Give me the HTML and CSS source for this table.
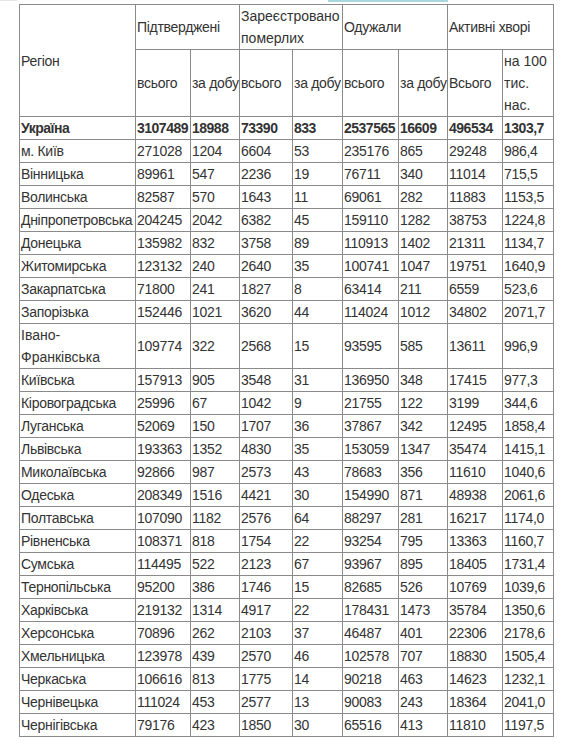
FILE: index.html
```html
<!DOCTYPE html>
<html lang="uk">
<head>
<meta charset="utf-8">
<title>Регіони</title>
<link rel="stylesheet" href="styles.css">
</head>
<body>
<div class="topbar"><span class="topbar-line"></span><span class="topbar-accent"></span></div>
<table class="stats">
<colgroup>
<col class="c-region"><col class="c1"><col class="c2"><col class="c3"><col class="c4"><col class="c5"><col class="c6"><col class="c7"><col class="c8">
</colgroup>
<thead>
<tr><td rowspan="2">Регіон</td><td colspan="2">Підтверджені</td><td colspan="2" class="wrap">Зареєстровано померлих</td><td colspan="2">Одужали</td><td colspan="2">Активні хворі</td></tr>
<tr><td>всього</td><td>за добу</td><td>всього</td><td>за добу</td><td>всього</td><td>за добу</td><td>Всього</td><td class="wrap">на 100 тис. нас.</td></tr>
</thead>
<tbody>
<tr class="total"><td>Україна</td><td>3107489</td><td>18988</td><td>73390</td><td>833</td><td>2537565</td><td>16609</td><td>496534</td><td>1303,7</td></tr>
<tr><td>м. Київ</td><td>271028</td><td>1204</td><td>6604</td><td>53</td><td>235176</td><td>865</td><td>29248</td><td>986,4</td></tr>
<tr><td>Вінницька</td><td>89961</td><td>547</td><td>2236</td><td>19</td><td>76711</td><td>340</td><td>11014</td><td>715,5</td></tr>
<tr><td>Волинська</td><td>82587</td><td>570</td><td>1643</td><td>11</td><td>69061</td><td>282</td><td>11883</td><td>1153,5</td></tr>
<tr><td>Дніпропетровська</td><td>204245</td><td>2042</td><td>6382</td><td>45</td><td>159110</td><td>1282</td><td>38753</td><td>1224,8</td></tr>
<tr><td>Донецька</td><td>135982</td><td>832</td><td>3758</td><td>89</td><td>110913</td><td>1402</td><td>21311</td><td>1134,7</td></tr>
<tr><td>Житомирська</td><td>123132</td><td>240</td><td>2640</td><td>35</td><td>100741</td><td>1047</td><td>19751</td><td>1640,9</td></tr>
<tr><td>Закарпатська</td><td>71800</td><td>241</td><td>1827</td><td>8</td><td>63414</td><td>211</td><td>6559</td><td>523,6</td></tr>
<tr><td>Запорізька</td><td>152446</td><td>1021</td><td>3620</td><td>44</td><td>114024</td><td>1012</td><td>34802</td><td>2071,7</td></tr>
<tr><td class="wrap">Івано-Франківська</td><td>109774</td><td>322</td><td>2568</td><td>15</td><td>93595</td><td>585</td><td>13611</td><td>996,9</td></tr>
<tr><td>Київська</td><td>157913</td><td>905</td><td>3548</td><td>31</td><td>136950</td><td>348</td><td>17415</td><td>977,3</td></tr>
<tr><td>Кіровоградська</td><td>25996</td><td>67</td><td>1042</td><td>9</td><td>21755</td><td>122</td><td>3199</td><td>344,6</td></tr>
<tr><td>Луганська</td><td>52069</td><td>150</td><td>1707</td><td>36</td><td>37867</td><td>342</td><td>12495</td><td>1858,4</td></tr>
<tr><td>Львівська</td><td>193363</td><td>1352</td><td>4830</td><td>35</td><td>153059</td><td>1347</td><td>35474</td><td>1415,1</td></tr>
<tr><td>Миколаївська</td><td>92866</td><td>987</td><td>2573</td><td>43</td><td>78683</td><td>356</td><td>11610</td><td>1040,6</td></tr>
<tr><td>Одеська</td><td>208349</td><td>1516</td><td>4421</td><td>30</td><td>154990</td><td>871</td><td>48938</td><td>2061,6</td></tr>
<tr><td>Полтавська</td><td>107090</td><td>1182</td><td>2576</td><td>64</td><td>88297</td><td>281</td><td>16217</td><td>1174,0</td></tr>
<tr><td>Рівненська</td><td>108371</td><td>818</td><td>1754</td><td>22</td><td>93254</td><td>795</td><td>13363</td><td>1160,7</td></tr>
<tr><td>Сумська</td><td>114495</td><td>522</td><td>2123</td><td>67</td><td>93967</td><td>895</td><td>18405</td><td>1731,4</td></tr>
<tr><td>Тернопільська</td><td>95200</td><td>386</td><td>1746</td><td>15</td><td>82685</td><td>526</td><td>10769</td><td>1039,6</td></tr>
<tr><td>Харківська</td><td>219132</td><td>1314</td><td>4917</td><td>22</td><td>178431</td><td>1473</td><td>35784</td><td>1350,6</td></tr>
<tr><td>Херсонська</td><td>70896</td><td>262</td><td>2103</td><td>37</td><td>46487</td><td>401</td><td>22306</td><td>2178,6</td></tr>
<tr><td>Хмельницька</td><td>123978</td><td>439</td><td>2570</td><td>46</td><td>102578</td><td>707</td><td>18830</td><td>1505,4</td></tr>
<tr><td>Черкаська</td><td>106616</td><td>813</td><td>1775</td><td>14</td><td>90218</td><td>463</td><td>14623</td><td>1232,1</td></tr>
<tr><td>Чернівецька</td><td>111024</td><td>453</td><td>2577</td><td>13</td><td>90083</td><td>243</td><td>18364</td><td>2041,0</td></tr>
<tr><td>Чернігівська</td><td>79176</td><td>423</td><td>1850</td><td>30</td><td>65516</td><td>413</td><td>11810</td><td>1197,5</td></tr>
</tbody>
</table>
</body>
</html>
```

FILE: styles.css
```css
html, body {
  margin: 0;
  padding: 0;
  background: #ffffff;
}

body {
  font-family: "Liberation Sans", Arial, sans-serif;
  font-size: 14px;
  color: #333333;
}

.topbar {
  display: flex;
  height: 2px;
  margin-bottom: 2px;
}

.topbar-line {
  width: 17px;
  height: 1px;
  background: #e6e6e6;
}

.topbar-accent {
  margin-left: 311px;
  width: 120px;
  height: 2px;
  background: #a9d7dc;
}

.stats {
  margin-left: 19px;
  border-collapse: collapse;
  table-layout: fixed;
  width: 535px;
}

.stats td {
  border: 1px solid #8a8a8a;
  padding: 0 0 0 1px;
  line-height: 22px;
  vertical-align: middle;
  text-align: left;
  white-space: nowrap;
  letter-spacing: -0.3px;
}

.stats td.wrap {
  white-space: normal;
  letter-spacing: 0;
}

.total td {
  font-weight: bold;
  letter-spacing: -0.5px;
}

.c-region { width: 116px; }
.c1 { width: 55px; }
.c2 { width: 49px; }
.c3 { width: 53px; }
.c4 { width: 50px; }
.c5 { width: 56px; }
.c6 { width: 49px; }
.c7 { width: 55px; }
.c8 { width: 51px; }
```
